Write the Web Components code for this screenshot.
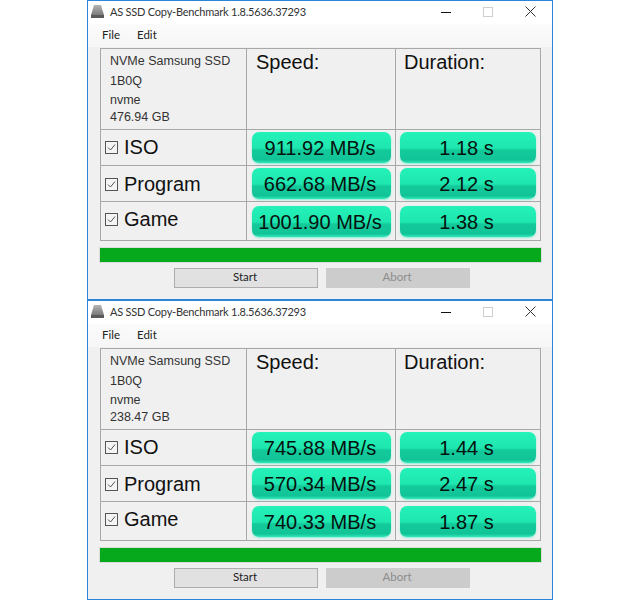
<!DOCTYPE html>
<html>
<head>
<meta charset="utf-8">
<title>AS SSD Copy-Benchmark</title>
<style>
  html, body { margin: 0; background: #fff; }
  body { width: 640px; height: 600px; overflow: hidden; }
  #page { display: flex; flex-direction: column; width: 466px; margin-left: 87px; }
</style>
</head>
<body>
<div id="page">
  <as-window>
    <as-drive name="NVMe Samsung SSD" fw="1B0Q" driver="nvme" size="476.94 GB"></as-drive>
    <as-row label="ISO" speed="911.92 MB/s" time="1.18 s" lift="1"></as-row>
    <as-row label="Program" speed="662.68 MB/s" time="2.12 s" drop="2"></as-row>
    <as-row label="Game" speed="1001.90 MB/s" time="1.38 s" lift="3" tall></as-row>
  </as-window>
  <as-window>
    <as-drive name="NVMe Samsung SSD" fw="1B0Q" driver="nvme" size="238.47 GB"></as-drive>
    <as-row label="ISO" speed="745.88 MB/s" time="1.44 s" lift="1"></as-row>
    <as-row label="Program" speed="570.34 MB/s" time="2.47 s" drop="2"></as-row>
    <as-row label="Game" speed="740.33 MB/s" time="1.87 s" lift="3" tall></as-row>
  </as-window>
</div>

<script>
const GRID = '146px 149px 145px';

// Window chrome: title bar, menu, slot for the result table, progress, buttons
class AsWindow extends HTMLElement {
  constructor() {
    super();
    this.attachShadow({ mode: 'open' });
    this.shadowRoot.innerHTML = `
      <style>
        :host {
          display: flex;
          flex-direction: column;
          box-sizing: border-box;
          height: 300px;
          border: 1px solid #2b86d8;
          background: #f0f0f0;
          font-family: Lato, "Noto Sans", sans-serif;
          color: #1a1a1a;
        }
        .title {
          display: flex;
          align-items: center;
          height: 23px;
          background: #fff;
          font-size: 11px;
          letter-spacing: -0.22px;
          color: #333;
        }
        .title svg.logo { margin: 0 6px 2px 3px; }
        .title span { flex: 1; white-space: nowrap; padding-bottom: 2px; }
        .ctl { display: flex; align-items: center; justify-content: center; width: 43px; height: 21px; padding-bottom: 2px; }
        .ctl.min { padding-left: 3px; box-sizing: border-box; }
        .menu {
          display: flex;
          gap: 17px;
          align-items: center;
          box-sizing: border-box;
          height: 23px;
          padding: 0 0 2px 14px;
          font-size: 11.5px;
          background: linear-gradient(#fbfbfb, #f6f6f6);
          color: #222;
        }
        .table {
          display: flex;
          flex-direction: column;
          width: 440px;
          margin: 1px 0 0 12px;
          border-top: 1px solid #a8a8a8;
          border-left: 1px solid #a8a8a8;
        }
        .bar {
          height: 14px;
          width: 441px;
          margin: 7px 0 0 12px;
          background: #06a81c;
          box-shadow: 0 0 0 1px #dcdcdc;
        }
        .buttons { display: flex; gap: 8px; margin: 6px 0 0 86px; }
        button {
          box-sizing: border-box;
          width: 144px;
          height: 20px;
          padding: 0 2px 3px 0;
          font: 11.5px Lato, "Noto Sans", sans-serif;
          color: #222;
          background: #e1e1e1;
          border: 1px solid #adadad;
        }
        button[disabled] { background: #cccccc; border-color: #cccccc; color: #8c8c8c; }
      </style>
      <div class="title">
        <svg class="logo" width="13" height="13" viewBox="0 0 13 13">
          <defs>
            <linearGradient id="disk" x1="0" y1="0" x2="0" y2="1">
              <stop offset="0" stop-color="#b4b4b4"/>
              <stop offset="1" stop-color="#7a7a7a"/>
            </linearGradient>
          </defs>
          <path d="M3 0h7l3 10H0z" fill="url(#disk)"/>
          <rect y="10" width="13" height="3" fill="#5a5a5a"/>
        </svg>
        <span>AS SSD Copy-Benchmark 1.8.5636.37293</span>
        <div class="ctl min"><svg width="10" height="10"><path d="M0 5.5h10" stroke="#111"/></svg></div>
        <div class="ctl"><svg width="10" height="10"><rect x=".5" y=".5" width="9" height="9" fill="none" stroke="#cfcfcf"/></svg></div>
        <div class="ctl"><svg width="11" height="11"><path d="M.5.5l10 10M10.5.5l-10 10" stroke="#333"/></svg></div>
      </div>
      <div class="menu"><span>File</span><span>Edit</span></div>
      <div class="table"><slot></slot></div>
      <div class="bar"></div>
      <div class="buttons"><button>Start</button><button disabled>Abort</button></div>
    `;
  }
}

// Head row of the table: drive info plus the two column captions
class AsDrive extends HTMLElement {
  constructor() {
    super();
    this.attachShadow({ mode: 'open' });
  }
  connectedCallback() {
    const a = n => this.getAttribute(n);
    this.shadowRoot.innerHTML = `
      <style>
        :host {
          display: grid;
          grid-template-columns: ${GRID};
          height: 80px;
          border-bottom: 1px solid #a8a8a8;
        }
        div { box-sizing: border-box; border-right: 1px solid #a8a8a8; }
        .info { padding: 4px 0 0 9px; font: 12.5px/16px "Liberation Sans", Arial, sans-serif; color: #333; }
        .info p { margin: 0; }
        .info .fw { margin: 4px 0 3px; }
        .info .size { margin-top: 1px; }
        .cap {
          padding: 0 0 0 8px;
          font: 20px/26px "Liberation Sans", Arial, sans-serif;
          color: #111;
        }
        .cap.speed { padding-left: 9px; }
      </style>
      <div class="info">
        <p>${a('name')}</p>
        <p class="fw">${a('fw')}</p>
        <p>${a('driver')}</p>
        <p class="size">${a('size')}</p>
      </div>
      <div class="cap speed">Speed:</div>
      <div class="cap">Duration:</div>
    `;
  }
}

// One benchmark line: checkbox, label, speed pill, duration pill
class AsRow extends HTMLElement {
  constructor() {
    super();
    this.attachShadow({ mode: 'open' });
  }
  connectedCallback() {
    const a = n => this.getAttribute(n);
    this.shadowRoot.innerHTML = `
      <style>
        :host {
          display: grid;
          grid-template-columns: ${GRID};
          height: ${this.hasAttribute('tall') ? 38 : 35}px;
          border-bottom: 1px solid #a8a8a8;
        }
        .cell { box-sizing: border-box; border-right: 1px solid #a8a8a8; display: flex; align-items: center; }
        .name {
          gap: 6px;
          padding: ${a('drop') || 0}px 0 ${a('lift') || 0}px 4px;
          font: 20px "Liberation Sans", Arial, sans-serif;
          color: #111;
        }
        .val { padding: 0 4px 0 5px; }
        .val.time { padding: 0 4px; }
      </style>
      <div class="cell name">
        <svg width="13" height="13" viewBox="0 0 13 13">
          <rect x=".5" y=".5" width="12" height="12" fill="#f4f4f4" stroke="#555"/>
          <path d="M3 6.5l2.5 2.5L10 3.5" fill="none" stroke="#555"/>
        </svg>
        <span>${a('label')}</span>
      </div>
      <div class="cell val"><as-pill>${a('speed')}</as-pill></div>
      <div class="cell val time"><as-pill>${a('time')}</as-pill></div>
    `;
  }
}

// Glossy green result box
class AsPill extends HTMLElement {
  constructor() {
    super();
    this.attachShadow({ mode: 'open' });
    this.shadowRoot.innerHTML = `
      <style>
        :host {
          display: flex;
          flex: 1;
          align-items: center;
          justify-content: center;
          box-sizing: border-box;
          height: 31px;
          padding: 2px 3px 0 0;
          border-radius: 7px;
          background: linear-gradient(#23f2b9 0%, #1fe6af 52%, #13ca9b 58%, #11c497 90%, #35e9bc 100%);
          box-shadow: 0 1px 2px rgba(45, 240, 195, 0.55);
          font: 20px "Liberation Sans", Arial, sans-serif;
          color: #06110e;
        }
      </style>
      <slot></slot>
    `;
  }
}

customElements.define('as-window', AsWindow);
customElements.define('as-drive', AsDrive);
customElements.define('as-row', AsRow);
customElements.define('as-pill', AsPill);
</script>
</body>
</html>
